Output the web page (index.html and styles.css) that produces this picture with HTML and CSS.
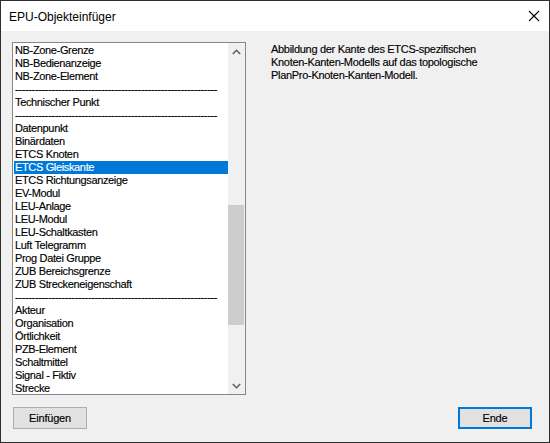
FILE: index.html
```html
<!DOCTYPE html>
<html lang="de">
<head>
<meta charset="utf-8">
<title>EPU-Objekteinfüger</title>
<link rel="stylesheet" href="styles.css">
</head>
<body>
<div class="window">
  <div class="titlebar">
    <span class="title">EPU-Objekteinfüger</span>
    <svg class="close" width="12" height="12" viewBox="0 0 12 12"><path d="M1 1 L11 11 M11 1 L1 11" stroke="#000" stroke-width="1.1" fill="none"/></svg>
  </div>
  <div class="client">
    <div class="main">
      <div class="listbox">
        <div class="items">
          <div class="item">NB-Zone-Grenze</div>
          <div class="item">NB-Bedienanzeige</div>
          <div class="item">NB-Zone-Element</div>
          <div class="item">-------------------------------------------------------------</div>
          <div class="item">Technischer Punkt</div>
          <div class="item">-------------------------------------------------------------</div>
          <div class="item">Datenpunkt</div>
          <div class="item">Binärdaten</div>
          <div class="item">ETCS Knoten</div>
          <div class="item selected">ETCS Gleiskante</div>
          <div class="item">ETCS Richtungsanzeige</div>
          <div class="item">EV-Modul</div>
          <div class="item">LEU-Anlage</div>
          <div class="item">LEU-Modul</div>
          <div class="item">LEU-Schaltkasten</div>
          <div class="item">Luft Telegramm</div>
          <div class="item">Prog Datei Gruppe</div>
          <div class="item">ZUB Bereichsgrenze</div>
          <div class="item">ZUB Streckeneigenschaft</div>
          <div class="item">-------------------------------------------------------------</div>
          <div class="item">Akteur</div>
          <div class="item">Organisation</div>
          <div class="item">Örtlichkeit</div>
          <div class="item">PZB-Element</div>
          <div class="item">Schaltmittel</div>
          <div class="item">Signal - Fiktiv</div>
          <div class="item">Strecke</div>
        </div>
        <div class="scrollbar">
          <div class="sb-btn">
            <svg width="9" height="6" viewBox="0 0 9 6"><path d="M0.8 5 L4.5 1.3 L8.2 5" stroke="#606060" stroke-width="1.6" fill="none"/></svg>
          </div>
          <div class="sb-track">
            <div class="sb-thumb"></div>
          </div>
          <div class="sb-btn">
            <svg width="9" height="6" viewBox="0 0 9 6"><path d="M0.8 1 L4.5 4.7 L8.2 1" stroke="#606060" stroke-width="1.6" fill="none"/></svg>
          </div>
        </div>
      </div>
      <div class="description">Abbildung der Kante des ETCS-spezifischen<br>Knoten-Kanten-Modells auf das topologische<br>PlanPro-Knoten-Kanten-Modell.</div>
    </div>
    <div class="buttons">
      <div class="button">Einfügen</div>
      <div class="button default">Ende</div>
    </div>
  </div>
</div>
</body>
</html>
```
FILE: styles.css
```css
* { box-sizing: border-box; }
html, body { margin: 0; padding: 0; background: #f0f0f0; }
body { font-family: "Liberation Sans", Arial, sans-serif; color: #000; }

.window {
  width: 550px;
  height: 443px;
  border: 1px solid #2f2f2f;
  display: flex;
  flex-direction: column;
  background: #f0f0f0;
}

.titlebar {
  height: 30px;
  background: #fff;
  display: flex;
  align-items: center;
  justify-content: space-between;
  padding: 0 9px 0 8px;
  flex: none;
}
.title { font-size: 12px; line-height: 16px; margin-top: 1px; }
.close { display: block; }

.client {
  flex: 1;
  display: flex;
  flex-direction: column;
  padding: 11px 17px 13px 11px;
}

.main { display: flex; flex: none; }

.listbox {
  width: 234px;
  height: 353px;
  border: 1px solid #828790;
  background: #fff;
  display: flex;
  flex: none;
}
.items {
  flex: 1;
  overflow: hidden;
  padding: 1px 0 0 1px;
  font-size: 11px;
  letter-spacing: -0.35px;
  -webkit-text-stroke: 0.15px #000;
}
.item {
  height: 13px;
  line-height: 13px;
  padding-left: 1px;
  white-space: nowrap;
  overflow: hidden;
}
.item.selected { background: #0078d7; color: #fff; -webkit-text-stroke: 0.15px #fff; }

.scrollbar {
  width: 17px;
  background: #f0f0f0;
  display: flex;
  flex-direction: column;
  flex: none;
}
.sb-btn {
  height: 17px;
  display: flex;
  align-items: center;
  justify-content: center;
  flex: none;
}
.sb-btn svg { display: block; margin-left: -1px; }
.sb-track { flex: 1; padding-top: 145px; }
.sb-thumb { height: 120px; background: #cdcdcd; margin-right: 1px; }

.description {
  margin-left: 25px;
  font-size: 11px;
  line-height: 13px;
  letter-spacing: -0.3px;
  padding-top: 1px;
  -webkit-text-stroke: 0.15px #000;
}

.buttons {
  display: flex;
  justify-content: space-between;
  margin-top: 12px;
  padding-left: 1px;
}
.button {
  width: 74px;
  height: 22px;
  background: #e1e1e1;
  border: 1px solid #adadad;
  font-size: 11px;
  letter-spacing: -0.2px;
  display: flex;
  align-items: center;
  justify-content: center;
  -webkit-text-stroke: 0.15px #000;
}
.button.default { border: 2px solid #0078d7; }
```
